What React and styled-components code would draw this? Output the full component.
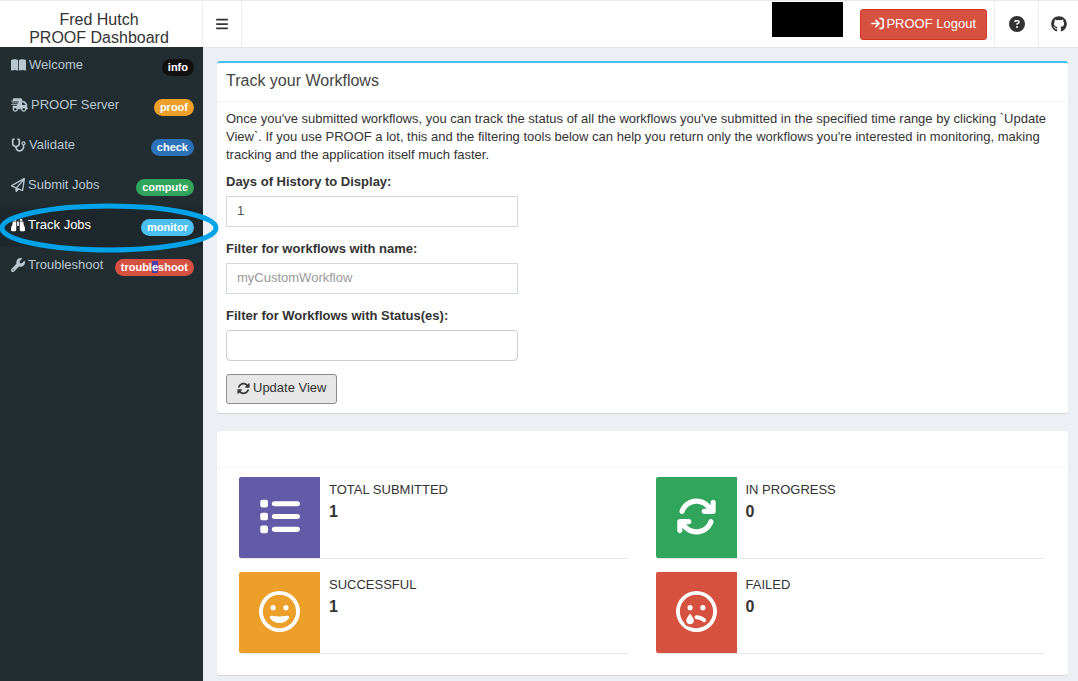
import React from "react";
import styled, { createGlobalStyle } from "styled-components";
import {
  FaBookOpen, FaTruckFast, FaStethoscope, FaRegPaperPlane, FaBinoculars, FaWrench,
  FaBars, FaArrowRightToBracket, FaCircleQuestion, FaGithub, FaArrowsRotate, FaRotate,
  FaList, FaRegFaceGrin, FaRegFaceSadTear,
} from "react-icons/fa6";

const Global = createGlobalStyle`
  *, *::before, *::after { box-sizing: border-box; }
  body {
    margin: 0;
    background: #ecf0f5;
    color: #333;
    font: 13px/18px "Liberation Sans", Arial, sans-serif;
  }
  button, input { font: inherit; color: inherit; }
`;

const Page = styled.div`
  display: grid;
  grid-template-columns: 203px minmax(0, 1fr);
  grid-template-rows: auto 1fr;
  min-height: 100vh;
`;

const Brand = styled.a`
  display: flex;
  flex-direction: column;
  align-items: center;
  padding: 10px 4px 0 0;
  height: 47px;
  border-top: 1px solid #e9e9e9;
  border-right: 1px solid #eee;
  background: #fff;
  color: #333;
  font-size: 16px;
  line-height: 18px;
  text-decoration: none;
`;

const Navbar = styled.header`
  display: flex;
  height: 48px;
  border-top: 1px solid #e9e9e9;
  border-bottom: 1px solid #e4e5e8;
  background: #fff;
`;

const ToggleButton = styled.button`
  display: grid;
  place-items: center;
  width: 39px;
  padding: 0;
  border: solid #eee;
  border-width: 0 1px 0 0;
  background: none;
  font-size: 14px;
`;

const NavTools = styled.div`
  display: flex;
  margin-left: auto;
`;

const UserBlock = styled.div`
  width: 71px;
  height: 35px;
  margin: 1px 17px 0 0;
  background: #000;
`;

const Button = styled.button`
  display: inline-flex;
  align-items: center;
  justify-content: center;
  gap: 3px;
  height: 30px;
  padding: 0 10px 2px;
  border: 1px solid #8c8c8c;
  border-radius: 3px;
  background: #e7e7e7;
  white-space: nowrap;
`;

const LogoutButton = styled(Button)`
  gap: 2px;
  height: 31px;
  margin: 8px 7px 0 0;
  border-color: #d33724;
  background: #d75140;
  color: #fff;
`;

const NavLink = styled.a`
  display: grid;
  place-items: center;
  width: ${(p) => p.$width}px;
  border-left: 1px solid #eee;
  color: #333;
  font-size: 16px;
`;

const Sidebar = styled.nav`
  position: relative;
  margin-top: -1px;
  background: #222d32;
`;

const Menu = styled.ul`
  margin: 0;
  padding: 0;
  list-style: none;
`;

const MenuLink = styled.a`
  display: flex;
  gap: 3px;
  height: 40px;
  padding: 9px 9px 0 11px;
  background: ${(p) => (p.$active ? "#1e282c" : "transparent")};
  color: ${(p) => (p.$active ? "#fff" : "#b8c7ce")};
  text-decoration: none;

  svg {
    flex: none;
    width: ${(p) => p.$iconWidth}px;
    height: 14px;
    margin-top: 2px;
  }
`;

const Badge = styled.span`
  align-self: flex-start;
  margin: 3px 0 0 auto;
  padding: 0 6px;
  border-radius: 9px;
  background: ${(p) => p.$color};
  color: #fff;
  font-size: 11px;
  font-weight: bold;
  line-height: 17px;
`;

const Selected = styled.span`
  background: #4b3fb0;
`;

const Highlight = styled.svg`
  position: absolute;
  top: 156px;
  left: -4px;
  z-index: 1;
  pointer-events: none;
`;

const Main = styled.main`
  display: flex;
  flex-direction: column;
  gap: 18px;
  padding: 13px 10px 5px 14px;
`;

const Card = styled.section`
  border-top: ${(p) => (p.$accent ? "2px solid #4bbfef" : "0")};
  border-radius: 3px;
  background: #fff;
  box-shadow: 0 1px 1px rgba(0, 0, 0, 0.1);
`;

const CardHeader = styled.header`
  height: ${(p) => p.$height}px;
  padding: 9px;
  border-bottom: 1px solid #f4f4f4;
`;

const CardTitle = styled.h3`
  margin: 0;
  color: #444;
  font-size: 16px;
  font-weight: normal;
  line-height: 18px;
`;

const CardBody = styled.div`
  padding: 8px 9px 9px;
`;

const Intro = styled.p`
  margin: 0 0 9px;
`;

const Field = styled.div`
  display: flex;
  flex-direction: column;
  width: 35%;
  margin-bottom: 13px;
`;

const Label = styled.label`
  margin-bottom: 5px;
  font-weight: bold;
`;

const Input = styled.input`
  width: 100%;
  height: 31px;
  padding: 0 10px 2px;
  border: 1px solid ${(p) => (p.$rounded ? "#ccc" : "#d2d6de")};
  border-radius: ${(p) => (p.$rounded ? 4 : 0)}px;
  background: #fff;
  color: #555;
  outline: none;

  &::placeholder { color: #999; }
`;

const StatGrid = styled.div`
  display: grid;
  grid-template-columns: repeat(2, minmax(0, 1fr));
  gap: 13px 27px;
  padding: 9px 23px 21px 22px;
`;

const Stat = styled.article`
  display: flex;
  height: 82px;
  border-bottom: 1px solid #e6e6e6;
  border-radius: 2px;
`;

const StatIcon = styled.div`
  display: grid;
  place-items: center;
  width: 81px;
  padding-bottom: 3px;
  border-radius: 2px 0 0 2px;
  background: ${(p) => p.$color};
  color: #fff;
  font-size: 41px;
`;

const StatText = styled.div`
  padding: 4px 9px;
`;

const StatLabel = styled.div`
  text-transform: uppercase;
`;

const StatValue = styled.div`
  font-size: 16px;
  font-weight: bold;
  line-height: 26px;
`;

const menu = [
  { icon: FaBookOpen, iconWidth: 15, label: "Welcome", badge: "info", color: "#111" },
  { icon: FaTruckFast, iconWidth: 17, label: "PROOF Server", badge: "proof", color: "#ec9f29" },
  { icon: FaStethoscope, iconWidth: 15, label: "Validate", badge: "check", color: "#2c72b8" },
  { icon: FaRegPaperPlane, iconWidth: 14, label: "Submit Jobs", badge: "compute", color: "#30a55b" },
  { icon: FaBinoculars, iconWidth: 14, label: "Track Jobs", badge: "monitor", color: "#4bbfef", active: true },
  { icon: FaWrench, iconWidth: 14, label: "Troubleshoot", badge: <>troubl<Selected>e</Selected>shoot</>, color: "#d75140" },
];

const stats = [
  { icon: FaList, label: "Total Submitted", value: 1, color: "#635ba7" },
  { icon: FaArrowsRotate, label: "In Progress", value: 0, color: "#30a55b" },
  { icon: FaRegFaceGrin, label: "Successful", value: 1, color: "#ec9f29" },
  { icon: FaRegFaceSadTear, label: "Failed", value: 0, color: "#d75140" },
];

export default function App() {
  return (
    <>
      <Global />
      <Page>
        <Brand href="#home"><span>Fred Hutch</span><span>PROOF Dashboard</span></Brand>
        <Navbar>
          <ToggleButton aria-label="Toggle navigation"><FaBars /></ToggleButton>
          <NavTools>
            <UserBlock />
            <LogoutButton><FaArrowRightToBracket /> PROOF Logout</LogoutButton>
            <NavLink href="#help" aria-label="Help" $width={44}><FaCircleQuestion /></NavLink>
            <NavLink href="#github" aria-label="GitHub" $width={40}><FaGithub /></NavLink>
          </NavTools>
        </Navbar>
        <Sidebar>
          <Menu>
            {menu.map(({ icon: Icon, iconWidth, label, badge, color, active }) => (
              <li key={label}>
                <MenuLink href="#menu" $active={active} $iconWidth={iconWidth}>
                  <Icon />
                  <span>{label}</span>
                  <Badge $color={color}>{badge}</Badge>
                </MenuLink>
              </li>
            ))}
          </Menu>
          <Highlight width="224" height="52" viewBox="0 0 224 52" aria-hidden="true">
            <ellipse cx="113" cy="25" rx="107" ry="22" fill="none" stroke="#00a2e8" strokeWidth="5" />
          </Highlight>
        </Sidebar>
        <Main>
          <Card $accent>
            <CardHeader $height={39}><CardTitle>Track your Workflows</CardTitle></CardHeader>
            <CardBody>
              <Intro>
                Once you've submitted workflows, you can track the status of all the workflows you've submitted in the
                specified time range by clicking `Update View`. If you use PROOF a lot, this and the filtering tools
                below can help you return only the workflows you're interested in monitoring, making tracking and the
                application itself much faster.
              </Intro>
              <Field>
                <Label htmlFor="days">Days of History to Display:</Label>
                <Input id="days" defaultValue="1" />
              </Field>
              <Field>
                <Label htmlFor="name">Filter for workflows with name:</Label>
                <Input id="name" placeholder="myCustomWorkflow" />
              </Field>
              <Field>
                <Label htmlFor="status">Filter for Workflows with Status(es):</Label>
                <Input id="status" $rounded />
              </Field>
              <Button><FaRotate /> Update View</Button>
            </CardBody>
          </Card>
          <Card>
            <CardHeader $height={37} />
            <StatGrid>
              {stats.map(({ icon: Icon, label, value, color }) => (
                <Stat key={label}>
                  <StatIcon $color={color}><Icon /></StatIcon>
                  <StatText>
                    <StatLabel>{label}</StatLabel>
                    <StatValue>{value}</StatValue>
                  </StatText>
                </Stat>
              ))}
            </StatGrid>
          </Card>
        </Main>
      </Page>
    </>
  );
}
